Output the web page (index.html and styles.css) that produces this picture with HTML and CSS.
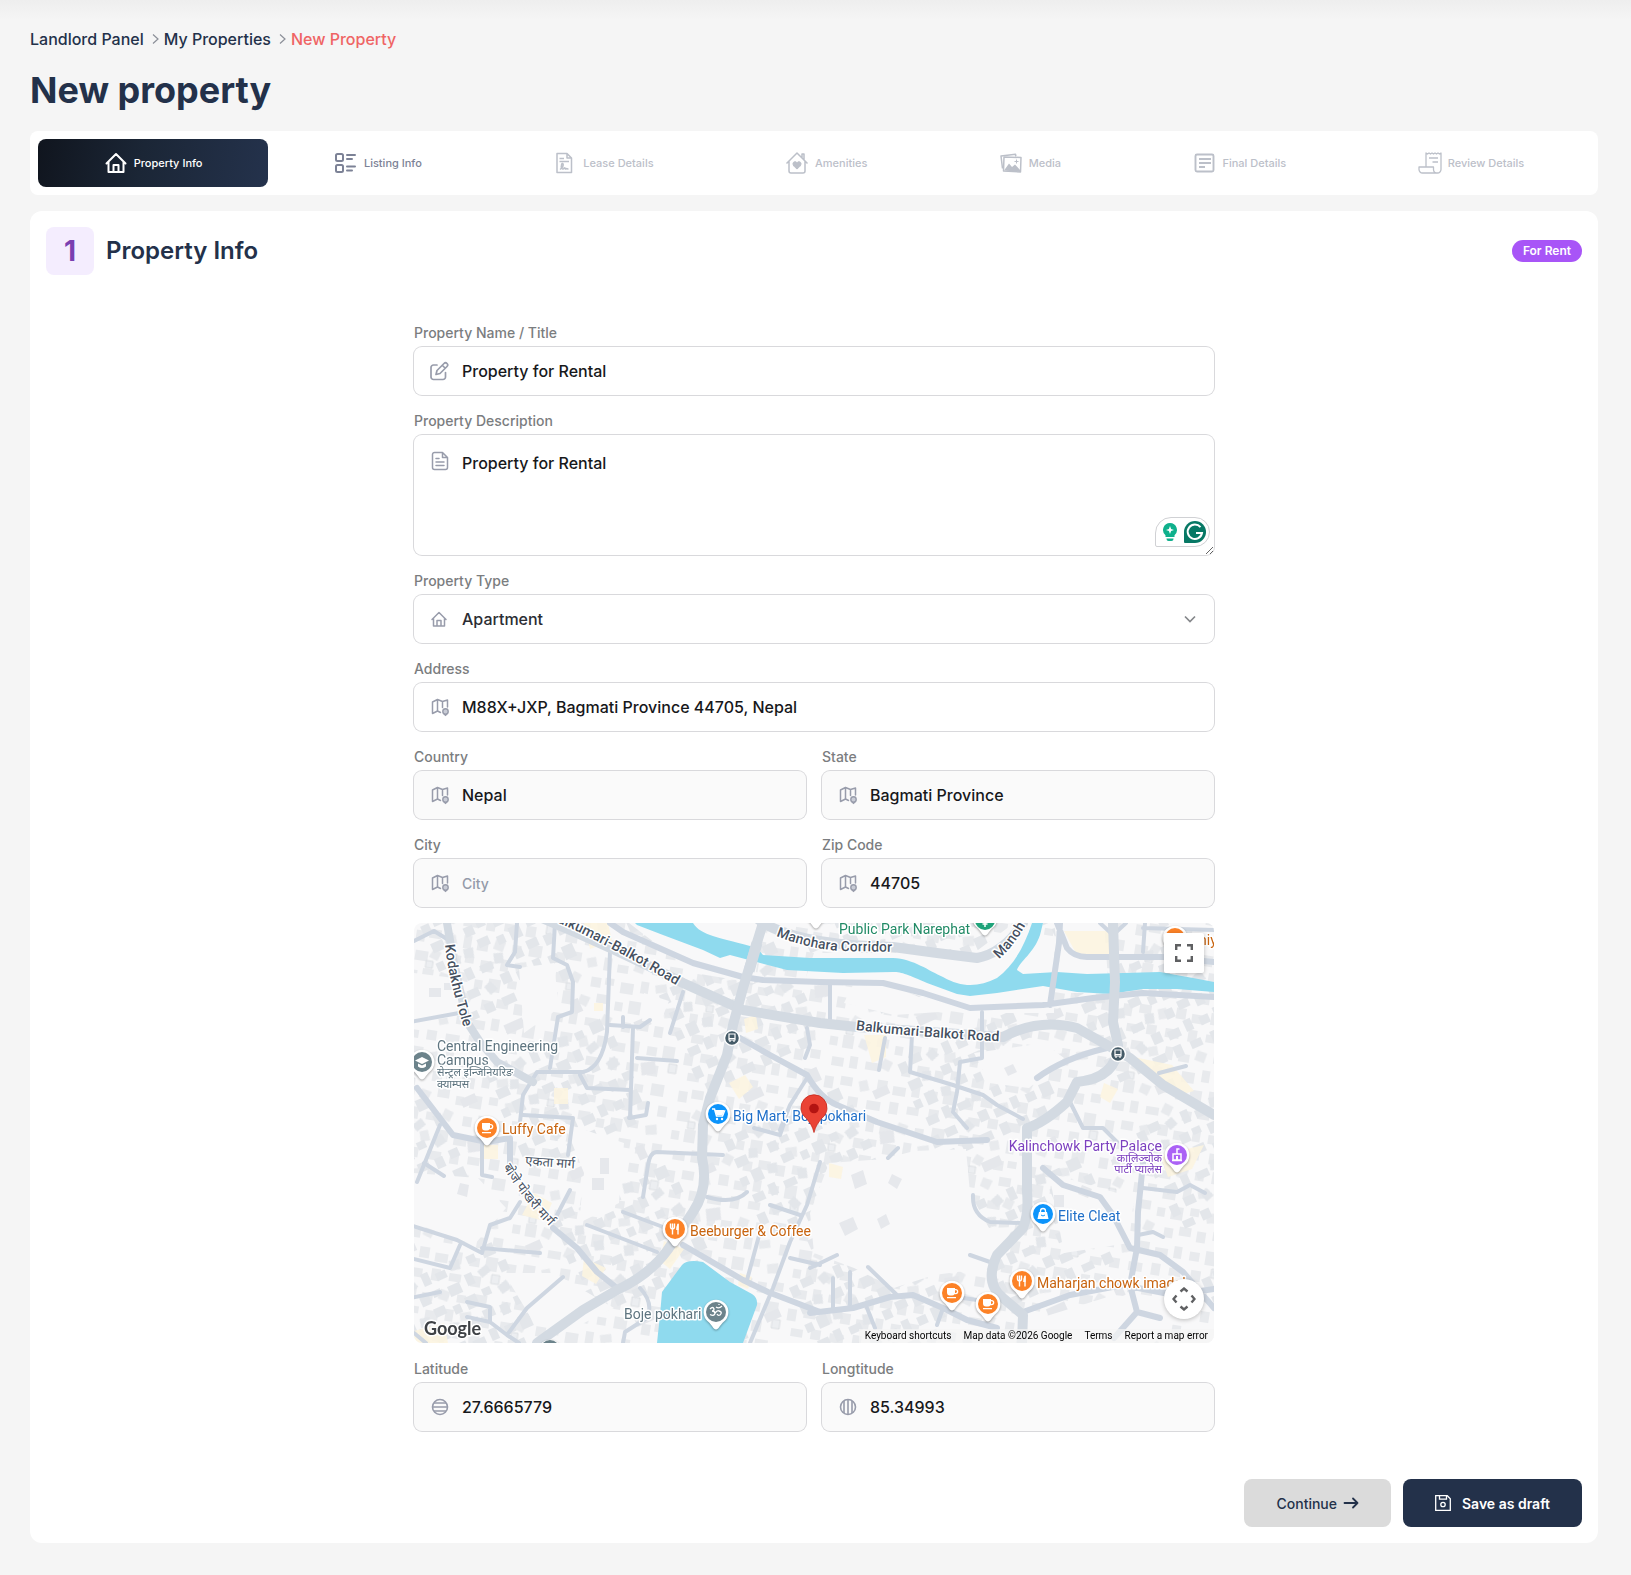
FILE: index.html
```html
<!DOCTYPE html>
<html lang="en">
<head>
<meta charset="utf-8">
<meta name="viewport" content="width=device-width, initial-scale=1">
<title>New property</title>
<link rel="stylesheet" href="styles.css">
</head>
<body>
<svg class="sprite" aria-hidden="true">
  <symbol id="i-sep" viewBox="0 0 16 16"><path d="M5 3.500l5 4.500-5 4.500" fill="none" stroke="currentColor" stroke-width="1.200"/></symbol>
  <symbol id="i-home" viewBox="0 0 24 24"><path d="M2.500 12.500 12 3l9.500 9.500M4.500 10.500V21h15V10.500M9.500 21v-7h5v7" fill="none" stroke="currentColor" stroke-width="2" stroke-linejoin="round" stroke-linecap="round"/></symbol>
  <symbol id="i-map" viewBox="0 0 20 20"><path d="M10.500 15.500 7.500 14l-5 2.500V5l5-2.500 5 2L17.500 3v7M7.500 2.500V14M12.500 4.500v6" fill="none" stroke="currentColor" stroke-width="1.500" stroke-linejoin="round" stroke-linecap="round"/><circle cx="15.500" cy="14.500" r="2.700" fill="#c9ccd6" stroke="currentColor" stroke-width="1.400"/><path d="M14 17l1.500 1.500 1.500-1.500" fill="none" stroke="currentColor" stroke-width="1.200"/></symbol>
  <symbol id="g-cup" viewBox="-8 -8 16 16"><path d="M-5-5h8v1h.700a2.600 2.600 0 0 1 0 5.200H2.500A3 3 0 0 1 0 2.500h-2a3 3 0 0 1-3-3zM3-2.800V0h.600a1.400 1.400 0 0 0 0-2.800zM-5 4H4v1.300h-9z" fill="#fff"/></symbol>
  <symbol id="g-fork" viewBox="-8 -8 16 16"><path d="M-4.500-5.500v3.500a2 2 0 0 0 4 0v-3.500M-2.500-5.500V5.500M3-5.200V5.500" fill="none" stroke="#fff" stroke-width="1.400"/><path d="M3.600-5.500V1H1.200c0-3 .4-5.700 2.400-6.500z" fill="#fff"/></symbol>
</svg>

<div class="page">
  <header class="page-head">
    <nav aria-label="Breadcrumb">
      <ol class="crumbs">
        <li><a href="#">Landlord Panel</a></li>
        <li><svg class="crumb-sep"><use href="#i-sep"/></svg><a href="#">My Properties</a></li>
        <li><svg class="crumb-sep"><use href="#i-sep"/></svg><a href="#" class="current" aria-current="page">New Property</a></li>
      </ol>
    </nav>
    <h1>New property</h1>
  </header>

  <nav class="steps" aria-label="Steps">
    <button type="button" class="step active"><svg viewBox="0 0 24 24"><use href="#i-home"/></svg>Property Info</button>
    <button type="button" class="step next"><svg viewBox="0 0 24 24"><g fill="none" stroke="currentColor" stroke-width="2"><rect x="2" y="3" width="7" height="7" rx="1.500"/><rect x="2" y="14" width="7" height="7" rx="1.500"/><path d="M13 4h8M13 8h5M13 15.500h8M13 19.500h5" stroke-linecap="round"/></g></svg>Listing Info</button>
    <button type="button" class="step"><svg viewBox="0 0 24 24"><g fill="none" stroke="currentColor" stroke-width="1.500"><path d="M4 2.500h10L18.500 7v14.500H4zM14 2.500V7h4.500" stroke-linejoin="round"/><path d="M6.500 7.500H11M6.500 10.500H16M7 18.500c3-2 4-5.500 2.500-6s-1.500 6 .5 5.500 1.500-2 2-1 .5 1.500 1.200.7.800.3 2.300.3M7.500 16h3"/></g></svg>Lease Details</button>
    <button type="button" class="step"><svg viewBox="0 0 24 24"><path d="M1.500 12.500 12 2l10.500 10.500M4 10.500V20a2 2 0 0 0 2 2h12a2 2 0 0 0 2-2v-9.500M17 7V3h2v6" fill="none" stroke="currentColor" stroke-width="1.500" stroke-linejoin="round"/><path d="M12 18c-2.500-2-4-3.500-4-5.200 0-2.300 2.800-3 4-1 1.200-2 4-1.300 4 1 0 1.700-1.500 3.200-4 5.200z" fill="currentColor" stroke="currentColor"/></svg>Amenities</button>
    <button type="button" class="step"><svg viewBox="0 0 24 24"><g fill="none" stroke="currentColor" stroke-width="1.500" stroke-linejoin="round"><path d="M3.500 17.500 2 5l14.500-1.800.4 2.300"/><path d="M5 6l17 .5L21.500 21 4.500 20z"/></g><path d="M5 19.500l5-7 3 3.500 3-2.500 5.500 6v1.500z" fill="currentColor"/><path d="M17.500 8.500v4M15.500 10.500h4" stroke="currentColor"/></svg>Media</button>
    <button type="button" class="step"><svg viewBox="0 0 24 24"><g fill="none" stroke="currentColor" stroke-width="1.900"><rect x="2.500" y="3.500" width="18" height="17" rx="1.500"/><path d="M6 8h12M6 12h12M6 16h6"/></g></svg>Final Details</button>
    <button type="button" class="step"><svg viewBox="0 0 24 24"><g fill="none" stroke="currentColor" stroke-width="1.300" stroke-linejoin="round"><path d="M8 16V2l1.500 1L11 2l1.500 1L14 2l1.500 1L17 2l1.500 1L20 2l1.500 1L23 2v16.500a3.500 3.500 0 0 1-3.500 3.500H4.500A3.500 3.500 0 0 1 1 18.500V16h14.500v2.500c0 2 1.500 3.500 4 3.500M11 7h9M14.500 11H20"/></g></svg>Review Details</button>
  </nav>

  <main class="card">
    <div class="card-head">
      <span class="num">1</span>
      <h2>Property Info</h2>
      <span class="pill">For Rent</span>
    </div>

    <form class="form">
      <div class="field wide">
        <label for="name">Property Name / Title</label>
        <div class="control">
          <svg class="icon" viewBox="0 0 20 20"><g fill="none" stroke="currentColor" stroke-width="1.700" stroke-linejoin="round" stroke-linecap="round"><path d="M7 4H3.500A2.500 2.500 0 0 0 1 6.500V16a2.500 2.500 0 0 0 2.500 2.500H13a2.500 2.500 0 0 0 2.500-2.500v-4.500"/><path d="M6 13.500l1-4 7-7a2 2 0 0 1 3 3l-7 7zM12.500 4.500l2.500 2.500"/></g></svg>
          <input id="name" type="text" value="Property for Rental">
        </div>
      </div>

      <div class="field wide">
        <label for="desc">Property Description</label>
        <div class="control area">
          <svg class="icon" viewBox="0 0 20 20"><path d="M12.500 1.500h-8a2 2 0 0 0-2 2v13a2 2 0 0 0 2 2h11a2 2 0 0 0 2-2v-10zM12.500 1.500v5h5M6 7.500h3M6 11h8M6 14.500h8" fill="none" stroke="currentColor" stroke-width="1.500" stroke-linejoin="round" stroke-linecap="round"/></svg>
          <textarea id="desc" spellcheck="false">Property for Rental</textarea>
          <div class="assistant">
            <svg viewBox="0 0 16 20" class="bulb"><path d="M8 1a7 7 0 0 1 4.500 12.300V15h-9v-1.700A7 7 0 0 1 8 1zM4.500 16.500h7v.5a2 2 0 0 1-2 2h-3a2 2 0 0 1-2-2z" fill="#0fb08c"/><path d="M8 4l1.100 2.900L12 8 9.100 9.100 8 12 6.900 9.100 4 8l2.900-1.100z" fill="#fff"/></svg>
            <svg viewBox="0 0 22 22" class="gmark"><path d="M11 0a11 11 0 0 1 0 22H1a1 1 0 0 1-1-1V11A11 11 0 0 1 11 0z" fill="#077865"/><path d="M16.500 6.200A7.200 7.200 0 1 0 18 12h-6" fill="none" stroke="#fff" stroke-width="2"/></svg>
          </div>
        </div>
      </div>

      <div class="field wide">
        <label for="type">Property Type</label>
        <div class="control">
          <svg class="icon" viewBox="0 0 20 20"><path d="M2 10.500 9 3.500l7 7M3.500 9.500V17h11V9.500M7 17v-5.500h4V17" fill="none" stroke="currentColor" stroke-width="1.500" stroke-linejoin="round" stroke-linecap="round"/></svg>
          <select id="type"><option>Apartment</option><option>House</option></select>
          <svg class="chevron" viewBox="0 0 16 16"><path d="M3 5.500l5 5 5-5" fill="none" stroke="currentColor" stroke-width="1.700"/></svg>
        </div>
      </div>

      <div class="field wide">
        <label for="address">Address</label>
        <div class="control"><svg class="icon"><use href="#i-map"/></svg><input id="address" type="text" value="M88X+JXP, Bagmati Province 44705, Nepal"></div>
      </div>

      <div class="field">
        <label for="country">Country</label>
        <div class="control muted"><svg class="icon"><use href="#i-map"/></svg><input id="country" type="text" value="Nepal" readonly></div>
      </div>
      <div class="field">
        <label for="state">State</label>
        <div class="control muted"><svg class="icon"><use href="#i-map"/></svg><input id="state" type="text" value="Bagmati Province" readonly></div>
      </div>
      <div class="field">
        <label for="city">City</label>
        <div class="control muted"><svg class="icon"><use href="#i-map"/></svg><input id="city" type="text" placeholder="City" readonly></div>
      </div>
      <div class="field">
        <label for="zip">Zip Code</label>
        <div class="control muted"><svg class="icon"><use href="#i-map"/></svg><input id="zip" type="text" value="44705" readonly></div>
      </div>

      <div class="map wide">
        <svg class="map-art" viewBox="0 0 800 420" preserveAspectRatio="xMidYMid slice" role="img" aria-label="Map">
          <defs>
            <g id="houses">
              <path d="M4 6h9v11H4zM17 3h12v9H17zM34 8l9-3 3 9-9 3zM52 4h8v13h-8zM66 9h11v8H66zM84 3l10 2-2 10-10-2zM101 6h9v8h-9zM118 3h13v12h-13zM6 26h13v10H6zM24 22l8 3-3 9-9-3zM42 25h10v10H42zM56 24h9v7h-9zM72 26h13v11H72zM92 22h8v12h-8zM106 24l11-3 2 8-11 3zM128 24h9v11h-9z"/>
              <path d="M3 46h8v9H3zM16 43h11v13H16zM34 44l10 2-3 10-9-3zM50 41h12v9H50zM69 46h8v9h-8zM83 43h12v13H83zM102 42h9v8h-9zM118 46l11-3 2 10-11 2zM8 66h12v9H8zM26 63h8v12h-8zM42 66h13v8H42zM60 60l9 3-3 10-9-3zM79 65h9v10h-9zM94 62h12v9H94zM112 64h9v11h-9zM128 62h10v9h-10z"/>
              <path d="M4 86h9v12H4zM20 84h12v9H20zM38 87l8-3 4 10-9 3zM57 82h10v11H57zM73 86h13v9H73zM92 82h8v12h-8zM108 85h10v9h-10zM124 82h12v14h-12zM10 105h12v8H10zM30 103h10v10H30zM49 104h14v9H49zM72 102h9v12h-9zM90 104h12v8H90zM112 103h10v11h-10z"/>
            </g>
            <pattern id="blocks" width="142" height="118" patternUnits="userSpaceOnUse" patternTransform="rotate(9)">
              <use href="#houses" fill="#e8eaed"/>
              <path d="M132 99h8v9h-8zM18 35h7v7h-7z" fill="#eceef1" stroke="#d7dade" stroke-width=".8"/>
            </pattern>
            <pattern id="blocks2" width="190" height="160" patternUnits="userSpaceOnUse" patternTransform="rotate(-24)">
              <use href="#houses" fill="#e3e6ea"/>
              <path d="M160 20h16v9h-16zM150 60l14 4-4 12-14-4zM40 130h20v10H40zM110 135h9v14h-9z" fill="#e5e7eb"/>
            </pattern>
            <path id="rd1" d="M135-4Q190 18 285 76"/>
            <path id="rd2" d="M442 107Q500 114 600 119"/>
            <path id="rd3" d="M362 13Q392 25 425 28L500 29"/>
            <path id="rd4" d="M585 36Q604 20 622-18"/>
            <path id="rd5" d="M31 22Q35 60 54 118"/>
            <path id="rd6" d="M89 244Q110 280 150 318"/>
            <path id="pin" d="M0 17.500C-2.500 17.500-4 13-8 9.500A12.400 12.400 0 1 1 8 9.500C4 13 2.500 17.500 0 17.500z"/>
          </defs>
          <rect width="800" height="420" fill="#f8f8f9"/>
          <rect width="800" height="420" fill="url(#blocks)"/>
          <rect width="800" height="420" fill="url(#blocks2)"/>
          <g fill="#f8f8f9">
            <path d="M415 240L470 236 500 228 552 226 556 270 575 305 600 304 575 345 520 352 480 365 440 345 400 330 396 290z"/>
            <path d="M0 50L40 55 50 92 0 100zM0 250L64 255 92 285 60 322 0 300zM215 0L350 0 340 60 280 50zM400 30L560 30 600 0 640 20 640 90 560 90 480 65 390 60zM560 130L630 120 650 135 615 165 575 160zM640 0L690 0 695 70 650 70zM105 45L140 40 145 85 110 110zM150 200L210 220 205 280 165 300 170 250zM635 250L720 275 715 320 650 330zM90 350L140 350 200 385 150 410 120 400zM610 400L700 372 780 380 740 420 620 420zM230 70L255 78 246 100 228 98zM440 60L480 64 540 88 480 92 430 80z"/>
          </g>
          <g fill="#e6e8ec"><path d="M437 252l12-5 4 14-12 5zM478 251l10 5-5 10-9-6zM425 300l14-6 5 12-13 7zM463 296l9-5 4 10-9 5zM640 272h10v12h-10zM668 262l10 4-4 9-10-4zM15 65h12v9H15zM30 60h9v7h-9zM46 260l9 2-2 12-10-3zM178 255h12v12h-12zM186 235h9v16h-9zM590 145l9-4 4 8-9 4z"/></g>
          <path d="M170 0h24l4 18-22 8zM180 80h9v8h-9zM650 8h50v26h-36zM140 165h14v16h-14zM330 96l12-4 2 14-12 4zM450 112h22v22l-14 6zM315 160l16-8 8 12-14 12zM120 270l18 10-8 18-22-6zM170 335l22 10-10 16-14-8zM250 318l20 8-14 20-10-8zM720 134l38 8 22 26-14 4zM690 160l14 6-8 14-10-6zM70 222h14v14H70zM415 240l14 4-2 12-12-2zM746 232l44-10-12 24-24 8zM0 408l30-8 4 20H0zM326 350l12 4-4 12-10-4z" fill="#fdf5df" opacity=".85"/>
          <path d="M279 0C287 13 305 14 343 25L349 32 396 35H479C500 36 515 48 529 54 548 65 565 64 583 55 600 42 610 24 618 0H629L626 12C620 30 606 38 603 47L609 51 643 49 673 51 746 49 779 55 800 59V69L763 66 729 66 696 71 663 69 629 63 583 70 556 73 543 71 513 60C495 52 488 49 479 49L429 50 373 47 316 32 306 35 289 27 249 12 223 2 221 0Z" fill="#8fdaee"/>
          <path d="M268 342Q273 336 289 339L316 359 338 371Q344 375 343 382L329 420H243L246 392 248 369Z" fill="#8fdaee"/>
          <g fill="none" stroke="#ced6e1" stroke-linecap="round" stroke-linejoin="round">
            <g stroke-width="4">
              <path d="M103 0 101 29 93 42 106 44M141 0 139 35 153 42 159 59 158 89 144 94 139 125 136 145M196 29 193 109Q188 145 169 149L123 149 109 172 106 199M196 102 226 104 236 97M209 104v-10M219 105 216 195M223 135 263 138M166 152 173 165 216 167M109 192 159 195 154 232M269 69 256 110M393 105 396 122 391 135M393 155 376 182 366 207M416 59V99"/>
              <path d="M568 89V135L546 139 543 169 539 189 553 205M498 112 496 149 539 162 569 172 583 182 609 196M471 115 465 147M686 0 699 12 712 0M731 0 729 29M729 5 800 7M26 202 3 259M-4 302 43 317 68 330 76 302 96 295 106 279M68 325 126 330M-4 335 36 345 46 322M-4 99 45 90M68 219V252L78 254M156 267 143 292M173 302 243 329M209 289 249 304M229 274 234 242Q236 229 243 229L309 232M293 274Q320 282 333 269M346 309 333 357M356 282 386 292M376 335 406 342"/>
              <path d="M149 354 113 385 93 412M53 379 76 384V399L53 394M76 399 93 412 105 420M-4 375 26 369M226 365Q240 380 233 395L211 409 209 420M406 239 393 282 376 319 359 365 336 420M559 272Q558 292 576 299L606 300M729 265 763 269 776 262 791 270M724 312 739 309 749 314M454 344 483 372M419 355V385M436 349V382M396 345 423 332M556 332 576 339M529 372 563 377M529 385 523 402M453 385 461 405M656 179 669 205H689L703 219M484 225 474 235M0 18 20 8 33 16M10 240 30 253M340 205 366 212 370 200M0 410 12 420M745 150 772 143M215 195 232 192 234 180"/>
            </g>
            <g stroke-width="6">
              <path d="M196 0 209 9 279 40 329 54 349 57 406 59 469 60 509 70 556 85 629 82 679 75 729 70 800 74M326 115 356 132 393 152Q406 175 423 182L463 199 523 219 573 217M646 0 645 20 636 82M643 0 653 25Q660 34 673 34L749 34 800 39M623 155Q650 135 693 125M269 322 329 357 354 369 406 389M629 245 649 262 686 274 699 292 716 325 746 332 769 349 800 385M729 240 724 289 723 325 716 362 723 389 746 395M396 390 439 385 476 374 499 372 529 385 553 397 583 405M609 389 656 372 709 362 760 372 800 366M723 389 700 415"/>
              <path d="M3 165 29 199 39 212 73 219 96 215V245M139 305 163 325 183 349 203 365"/>
            </g>
            <g stroke="#d3dae2" stroke-width="10">
              <path d="M128-5Q200 25 269 60L329 87 406 100 443 104 589 114Q625 95 663 105L693 122 716 135 749 162 800 192"/>
              <path d="M349 0 329 65 319 102 313 132 296 175 289 202 288 235Q295 265 279 289L259 319Q240 350 203 367L169 387 123 420"/>
              <path d="M345-3Q380 22 479 24L523 30 563 35Q590 30 609 0M699 0 701 59 699 99 704 122Q703 155 663 159L653 179Q630 200 613 205V269Q615 290 609 305L583 332Q570 360 589 375L609 392 608 420"/>
              <path d="M33 0 39 35 53 99 66 119 83 139 119 159" stroke-width="8"/>
            </g>
          </g>
          <path d="M343 20l-8 28" stroke="#d3dae2" stroke-width="11"/>

          <g class="road-name">
            <text><textPath href="#rd1">Balkumari-Balkot Road</textPath></text>
            <text><textPath href="#rd2">Balkumari-Balkot Road</textPath></text>
            <text><textPath href="#rd3">Manohara Corridor</textPath></text>
            <text><textPath href="#rd4">Manoh</textPath></text>
            <text><textPath href="#rd5">Kodakhu Tole</textPath></text>
            <text class="deva" transform="translate(111 242) rotate(4)">एकता मार्ग</text>
            <text class="deva"><textPath href="#rd6">बोजे पोखरी मार्ग</textPath></text>
          </g>

          <g stroke="#fff" stroke-width="1.500" fill="#455b68"><circle cx="318" cy="115" r="7.500"/><circle cx="704" cy="131" r="7.500"/></g>
          <path d="M315 111h6v6h-6zM701 127h6v6h-6z" fill="none" stroke="#fff" stroke-width="1.200"/>
          <path d="M315 115.500h6M701 131.500h6M316 117v2M320 117v2M702 133v2M706 133v2" stroke="#fff" stroke-width="1.200"/>

          <g class="pins">
            <g fill="#fff">
              <use href="#pin" x="8" y="139"/><use href="#pin" x="73" y="205"/><use href="#pin" x="304" y="191"/><use href="#pin" x="261" y="306"/><use href="#pin" x="302" y="389"/><use href="#pin" x="763" y="232"/><use href="#pin" x="629" y="291"/><use href="#pin" x="608" y="358"/><use href="#pin" x="538" y="370"/><use href="#pin" x="574" y="381"/><use href="#pin" x="571" y="-5"/><use href="#pin" x="402" y="-12"/><use href="#pin" x="761" y="15"/><use href="#pin" x="136" y="429"/>
            </g>
            <g fill="#6c838b"><circle cx="8" cy="139" r="10"/><circle cx="302" cy="389" r="10"/><circle cx="136" cy="427" r="10"/></g>
            <g fill="#fc8227"><circle cx="73" cy="205" r="10"/><circle cx="261" cy="306" r="10"/><circle cx="608" cy="358" r="10"/><circle cx="538" cy="370" r="10"/><circle cx="574" cy="381" r="10"/><circle cx="761" cy="15" r="10"/></g>
            <g fill="#0d94fb"><circle cx="304" cy="191" r="10"/><circle cx="629" cy="291" r="10"/></g>
            <circle cx="763" cy="232" r="10" fill="#ab62f5"/>
            <circle cx="571" cy="-3" r="10" fill="#1fa37a"/><path d="M571 0v4M568.500 1h5" stroke="#fff" stroke-width="1.500"/>
            <use href="#g-cup" x="65" y="197" width="16" height="16"/><use href="#g-cup" x="530" y="362" width="16" height="16"/><use href="#g-cup" x="566" y="373" width="16" height="16"/>
            <use href="#g-fork" x="253" y="298" width="16" height="16"/><use href="#g-fork" x="600" y="350" width="16" height="16"/>
            <path d="M1 137.500l7-3.500 7 3.500-7 3.500zM4 140.500v3q4 3 8 0v-3l-4 2z" fill="#fff"/>
            <path d="M298 186h2.500l2 7h6l2-5h-9" fill="none" stroke="#fff" stroke-width="1.500"/><path d="M301 187h9l-1.500 5h-6z" fill="#fff"/><circle cx="303" cy="196" r="1.200" fill="#fff"/><circle cx="308" cy="196" r="1.200" fill="#fff"/>
            <path d="M625 289h8l1.500 7h-11z" fill="#fff"/><path d="M626.500 290v-2a2.500 2.500 0 0 1 5 0v2" fill="none" stroke="#fff" stroke-width="1.300"/><path d="M627 292q2 2 4 0" fill="none" stroke="#0d94fb"/>
            <path d="M759 231h8v6h-8zM758 237.500h10M763 231v-5h2.500" fill="none" stroke="#fff" stroke-width="1.500"/><path d="M762 233h2v4h-2z" fill="#fff"/>
            <path d="M296 386q3-3 4 0 0 2-2 2 3 0 3 2.500-1 3-5 1M301 390q3-3 4-2 4 1 1 4-2 1-3-1M302 384q3 2 6-1M305 381v1" fill="none" stroke="#fff" stroke-width="1.300"/>
          </g>

          <g class="poi">
            <g fill="#5f7580"><text x="23" y="128">Central Engineering</text><text x="23" y="142">Campus</text><text class="small" x="23" y="153">सेन्ट्रल इन्जिनियरिङ</text><text class="small" x="23" y="165">क्याम्पस</text><text x="210" y="396">Boje pokhari</text></g>
            <g fill="#c8640f"><text x="88" y="211">Luffy Cafe</text><text x="276" y="313">Beeburger &amp; Coffee</text><text x="623" y="365">Maharjan chowk imadol</text><text x="785" y="22">niya</text></g>
            <g fill="#1f6fc9"><text x="319" y="198">Big Mart, Bojepokhari</text><text x="644" y="298">Elite Cleat</text></g>
            <g fill="#7c40bf" text-anchor="end"><text x="748" y="228">Kalinchowk Party Palace</text><text class="small" x="748" y="239">कालिञ्चोक</text><text class="small" x="748" y="250">पार्टी प्यालेस</text></g>
            <text x="425" y="11" fill="#218a66">Public Park Narephat</text>
          </g>
          <text class="brand" x="10" y="412">Google</text>
          <path d="M400 209.500C398.500 203 396 200 392 195A13 13 0 1 1 408 195C404 200 401.500 203 400 209.500z" fill="#ea4335" stroke="#c5281c" stroke-width=".8"/><circle cx="400" cy="185.500" r="4.800" fill="#b31412"/>
        </svg>
        <button type="button" class="map-btn full" aria-label="Toggle fullscreen view"><svg viewBox="0 0 18 18"><path d="M1.200 6V1.200H6M12 1.200h4.800V6M16.800 12v4.800H12M6 16.800H1.200V12" fill="none" stroke="#5f6062" stroke-width="2.400"/></svg></button>
        <button type="button" class="map-btn pan" aria-label="Map camera controls"><svg viewBox="0 0 24 24"><path d="M8.500 4.500 12 1.500l3.500 3M8.500 19.500l3.500 3 3.500-3M4.500 8.500 1.500 12l3 3.500M19.500 8.500l3 3.500-3 3.500" fill="none" stroke="#5f6062" stroke-width="2.400"/></svg></button>
        <div class="map-foot"><a href="#">Keyboard shortcuts</a><span>Map data ©2026 Google</span><a href="#">Terms</a><a href="#">Report a map error</a></div>
      </div>

      <div class="field">
        <label for="lat">Latitude</label>
        <div class="control muted"><svg class="icon" viewBox="0 0 20 20"><g fill="none" stroke="currentColor" stroke-width="1.600"><circle cx="10" cy="10" r="7.500"/><path d="M4 6h12M2.500 10h15M4 14h12"/></g></svg><input id="lat" type="text" value="27.6665779" readonly></div>
      </div>
      <div class="field">
        <label for="lng">Longtitude</label>
        <div class="control muted"><svg class="icon" viewBox="0 0 20 20"><g fill="none" stroke="currentColor" stroke-width="1.600"><circle cx="10" cy="10" r="7.500"/><path d="M6 4v12M10 2.500v15M14 4v12"/></g></svg><input id="lng" type="text" value="85.34993" readonly></div>
      </div>
    </form>

    <div class="actions">
      <button type="button" class="btn gray">Continue<svg viewBox="0 0 16 16"><path d="M1.500 8h13M10 3.500 14.500 8 10 12.500" fill="none" stroke="currentColor" stroke-width="1.800" stroke-linejoin="round" stroke-linecap="round"/></svg></button>
      <button type="button" class="btn navy"><svg viewBox="0 0 16 16"><g fill="none" stroke="currentColor" stroke-width="1.300"><path d="M.7.700h11.600l3 3v11.600H.7z"/><path d="M4.500.700v3.500h7V.700"/><circle cx="8" cy="9.500" r="2.200"/></g></svg>Save as draft</button>
    </div>
  </main>
</div>
</body>
</html>
```
FILE: styles.css
```css
* { box-sizing: border-box; }
body {
  margin: 0;
  background: #f5f5f5 linear-gradient(#eeeeee, #f5f5f5) no-repeat top / 100% 20px;
  font-family: Inter, "Liberation Sans", sans-serif;
  color: #23314a;
}
h1, h2, ol { margin: 0; padding: 0; }
a { color: inherit; text-decoration: none; }
button, input, textarea, select { font: inherit; color: inherit; }
.sprite { position: absolute; width: 0; height: 0; }
.page { padding: 27px 33px 32px 30px; }

.crumbs { display: flex; list-style: none; font-size: 16px; font-weight: 500; line-height: 24px; }
.crumbs li { display: flex; align-items: center; }
.crumb-sep { width: 16px; height: 16px; margin-left: 4px; color: #8b8f98; }
.current { color: #ef6464; }
h1 { margin: 17px 0 19px; font-size: 36px; line-height: 44px; font-weight: 700; }

.steps { display: flex; padding: 8px; background: #fff; border-radius: 8px; }
.step {
  flex: 1 1 auto; display: flex; align-items: center; justify-content: center; gap: 6px;
  height: 48px; padding: 0; border: 0; border-radius: 8px; background: none;
  font-size: 11px; font-weight: 500; color: #bcc0c9;
}
.step svg { width: 24px; height: 24px; }
.step.next { color: #7c8296; }
.step.active { background: linear-gradient(100deg, #10151e, #1b2636 45%, #24324c); color: #fff; }

.card { margin-top: 16px; padding: 16px; background: #fff; border-radius: 12px; }
.card-head { display: flex; align-items: center; gap: 12px; }
.num {
  display: grid; place-items: center; width: 48px; height: 48px; border-radius: 8px;
  background: #f4edfe; color: #7a3fb0; font-size: 28px; font-weight: 700;
}
h2 { font-size: 24px; line-height: 32px; font-weight: 600; }
.pill {
  margin-left: auto; padding: 0 11px; border-radius: 11px; background: #a855f7; color: #fff;
  font-size: 12px; line-height: 22px; font-weight: 600;
}

.form { display: grid; grid-template-columns: 1fr 1fr; gap: 16px; max-width: 800px; margin: 48px auto; }
.wide { grid-column: 1 / -1; }
.field { display: flex; flex-direction: column; gap: 4px; min-width: 0; }
.field label { font-size: 14px; line-height: 20px; font-weight: 500; color: #7b7d80; }
.control {
  position: relative; display: flex; align-items: center; height: 48px;
  padding-left: 16px; gap: 12px; border-radius: 8px; background: #fff; box-shadow: 0 0 0 1px #d9d9dc;
}
.control.muted { background: #fafafa; }
.icon { flex: none; width: 20px; height: 20px; color: #989cab; }
.control input, .control textarea, .control select {
  flex: 1; min-width: 0; height: 100%; padding: 0; border: 0; outline: 0; background: none;
  font-size: 16px; font-weight: 500; line-height: 24px; color: #17181b;
}
.control select { appearance: none; color: #2b2d33; }
.control input::placeholder { font-size: 14px; color: #949aa9; opacity: 1; }
.chevron { width: 16px; height: 16px; margin-right: 16px; color: #85878b; }
.control.area { height: auto; align-items: flex-start; }
.area .icon { margin-top: 16px; }
.control.area textarea { display: block; height: 120px; padding: 16px 16px 0 0; resize: vertical; border-radius: 8px; }
.assistant {
  position: absolute; right: 4px; bottom: 8px; display: flex; align-items: center; justify-content: space-between;
  width: 55px; height: 30px; padding: 0 3px 0 6px; background: #fff;
  border: 1px solid #d0d1d4; border-radius: 16px 15px 15px 2px;
}
.bulb { width: 16px; height: 20px; }
.gmark { width: 22px; height: 22px; }

.map { position: relative; overflow: hidden; height: 420px; border-radius: 8px; font-family: Roboto, "Noto Sans", sans-serif; }
.map-art { display: block; width: 100%; height: 100%; }
.map-art text { paint-order: stroke; stroke: #fff; stroke-width: 3px; stroke-linejoin: round; }
.poi text { font-size: 14px; }
.poi .small { font-size: 11px; }
.road-name text { font-size: 14px; font-weight: 500; fill: #45505f; }
.road-name .deva { font-size: 13px; font-weight: 400; }
.pins { filter: drop-shadow(0 1px 1px rgba(0, 0, 0, .35)); }
.brand { font-family: Lato, sans-serif; font-size: 18px; font-weight: 700; fill: #3f4246; }
.map-btn {
  position: absolute; right: 10px; display: grid; place-items: center; width: 40px; height: 40px;
  padding: 0; border: 0; background: #fff; box-shadow: 0 1px 4px rgba(0, 0, 0, .25);
}
.full { top: 10px; border-radius: 2px; }
.full svg { width: 18px; height: 18px; }
.pan { bottom: 24px; border-radius: 50%; }
.pan svg { width: 24px; height: 24px; }
.map-foot {
  position: absolute; right: 0; bottom: 0; display: flex; gap: 12px; padding: 0 6px;
  background: rgba(245, 245, 245, .7); font-size: 10px; line-height: 14px; color: #000;
}

.actions { display: flex; justify-content: flex-end; gap: 12px; }
.btn {
  display: flex; align-items: center; height: 48px; padding: 0 32px; border: 0; border-radius: 8px;
  font-size: 14px; font-weight: 500;
}
.btn svg { width: 16px; height: 16px; }
.gray { background: #dbdbdb; gap: 6px; }
.navy { background: #23314a; color: #fff; gap: 11px; font-weight: 600; }
```
